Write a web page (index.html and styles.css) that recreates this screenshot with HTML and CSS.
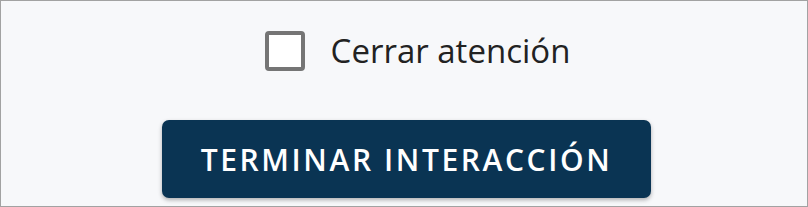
FILE: index.html
```html
<!DOCTYPE html>
<html lang="es">
<head>
<meta charset="utf-8">
<link rel="stylesheet" href="styles.css">
</head>
<body>
<div class="frame">
  <label class="check-row">
    <span class="checkbox"></span>
    <span class="check-label">Cerrar atención</span>
  </label>
  <button class="end-btn">TERMINAR INTERACCIÓN</button>
</div>
</body>
</html>
```
FILE: styles.css
```css
html, body {
  margin: 0;
  padding: 0;
}
.frame {
  width: 808px;
  height: 207px;
  box-sizing: border-box;
  border: 1px solid #a2a2a2;
  background: #f7f8fa;
  display: flex;
  flex-direction: column;
  align-items: center;
  padding-top: 30px;
  font-family: "Open Sans", "Noto Sans", sans-serif;
}
.check-row {
  display: flex;
  align-items: center;
  gap: 26px;
  margin-left: 27px;
  height: 40px;
}
.checkbox {
  width: 40px;
  height: 40px;
  box-sizing: border-box;
  border: 4px solid #757575;
  border-radius: 4px;
  background: #ffffff;
}
.check-label {
  font-size: 33px;
  color: #222222;
  line-height: 40px;
}
.end-btn {
  margin-top: 49px;
  margin-left: 5px;
  width: 489px;
  height: 78px;
  border: none;
  border-radius: 7px;
  background: #0a3453;
  color: #ffffff;
  font-family: "Open Sans", "Noto Sans", sans-serif;
  font-weight: 600;
  font-size: 30px;
  letter-spacing: 2.6px;
  box-shadow: 0 2px 4px rgba(0,0,0,0.3);
  padding: 0;
}
```
